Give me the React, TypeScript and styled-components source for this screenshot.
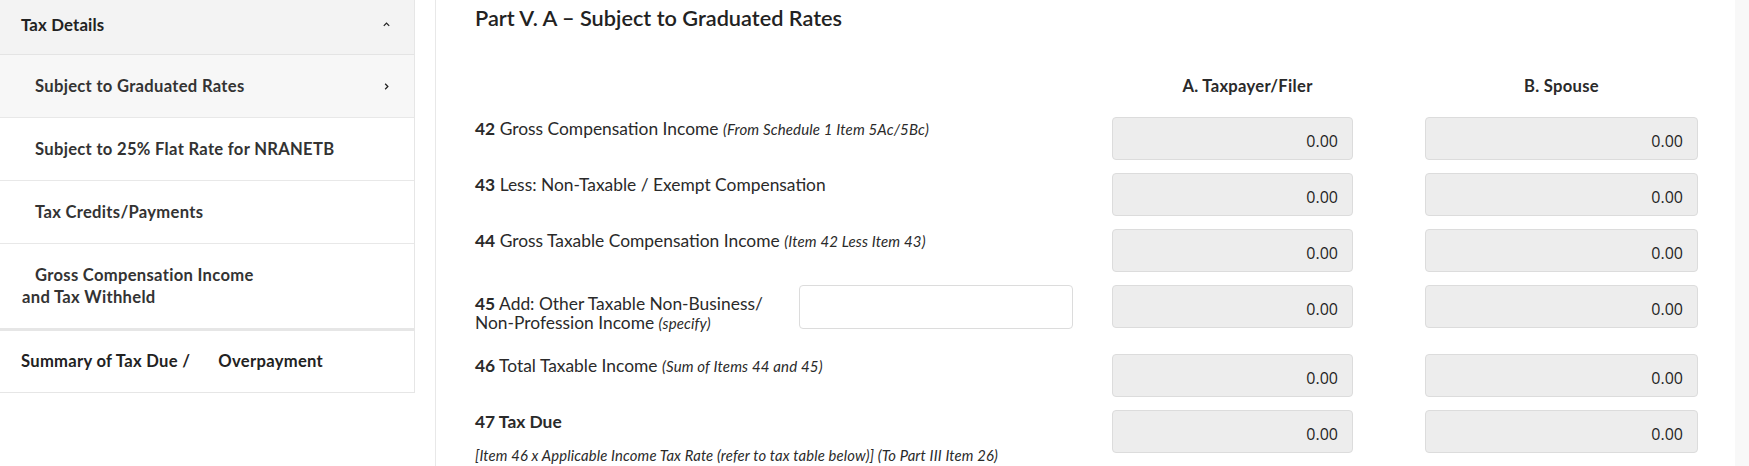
import React from "react";
import styled, { createGlobalStyle } from "styled-components";

const GlobalStyle = createGlobalStyle`
  html, body { margin: 0; padding: 0; background: #ffffff; }
  body { font-family: Lato, "Open Sans", sans-serif; color: #2a2a2a; }
  * { box-sizing: border-box; }
`;

const Page = styled.div`
  display: flex;
  align-items: flex-start;
  width: 1749px;
  height: 466px;
  overflow: hidden;
  background: #ffffff;
`;

const Sidebar = styled.nav`
  width: 415px;
  flex: none;
  border-right: 1px solid #e6e6e6;
  border-bottom: 1px solid #e6e6e6;
`;

const GroupHeader = styled.div`
  display: flex;
  align-items: center;
  justify-content: space-between;
  height: 55px;
  padding: 0 22px 5px 21px;
  background: #f3f3f3;
  border-bottom: 1px solid #e4e4e4;
  font-size: 16.8px;
  letter-spacing: 0.15px;
  font-weight: 700;
  color: #222;
`;

const SubItem = styled.div<{ $active?: boolean; $last?: boolean }>`
  display: flex;
  align-items: center;
  justify-content: space-between;
  padding: 20px 22px 20px 22px;
  line-height: 22px;
  font-size: 16.6px;
  letter-spacing: 0.3px;
  font-weight: 700;
  color: #333;
  text-indent: 13px;
  background: ${(p) => (p.$active ? "#f7f7f7" : "#ffffff")};
  border-bottom: ${(p) => (p.$last ? "3px solid #e6e6e6" : "1px solid #e8e8e8")};
`;

const TopItem = styled.div`
  display: flex;
  align-items: center;
  padding: 19px 22px 20px 21px;
  line-height: 22px;
  font-size: 16.6px;
  letter-spacing: 0.3px;
  font-weight: 700;
  color: #222;
`;

const Spacer = styled.span`
  display: inline-block;
  width: 28px;
`;

const Chevron = styled.svg`
  width: 9px;
  height: 9px;
  flex: none;
  margin-right: 1px;
`;

const Main = styled.main`
  flex: 1;
  margin-left: 20px;
  height: 466px;
  border-left: 1px solid #e8e8e8;
  padding: 4px 0 0 39px;
`;

const Gutter = styled.div`
  width: 14px;
  flex: none;
  height: 466px;
  background: #f8f8f8;
`;

const Title = styled.h2`
  margin: 0;
  font-size: 21.7px;
  line-height: 28px;
  font-weight: 600;
  color: #222;
`;

const Row = styled.div<{ $mb?: number; $mt?: number }>`
  display: grid;
  grid-template-columns: 324px 274px 39px 241px 72px 273px;
  grid-template-areas: "label spec . a . b";
  align-items: start;
  margin-top: ${(p) => p.$mt ?? 0}px;
  margin-bottom: ${(p) => p.$mb ?? 14}px;
`;

const ColHead = styled.div<{ $area: string; $shift?: number }>`
  grid-area: ${(p) => p.$area};
  text-align: center;
  padding-left: ${(p) => p.$shift ?? 0}px;
  font-size: 16.6px;
  letter-spacing: 0.3px;
  font-weight: 700;
  line-height: 22px;
  color: #2a2a2a;
`;

const Label = styled.div<{ $wide?: boolean; $pt?: number; $lh?: number }>`
  grid-column: ${(p) => (p.$wide ? "1 / span 2" : "1")};
  font-size: 17.4px;
  line-height: ${(p) => p.$lh ?? 24}px;
  padding-top: ${(p) => p.$pt ?? 0}px;
  color: #2a2a2a;
  white-space: nowrap;
`;

const Num = styled.b`
  font-weight: 700;
`;

const Note = styled.i`
  font-size: 15px;
  font-style: italic;
  letter-spacing: 0.15px;
`;

const SubNote = styled.div`
  margin-top: 12px;
  font-size: 14.8px;
  font-style: italic;
  line-height: 18px;
  letter-spacing: 0.15px;
`;

const Amount = styled.input<{ $area: string }>`
  grid-area: ${(p) => p.$area};
  height: 43px;
  width: 100%;
  padding: 4px 14px 0 10px;
  border: 1px solid #dcdcdc;
  border-radius: 4px;
  background: #ededed;
  text-align: right;
  font-family: "Open Sans", "Noto Sans", sans-serif;
  font-size: 16px;
  color: #1f1f1f;
  outline: none;
`;

const Specify = styled.input`
  grid-area: spec;
  height: 44px;
  width: 100%;
  border: 1px solid #dcdcdc;
  border-radius: 4px;
  background: #ffffff;
  outline: none;
`;

const ChevronUp = () => (
  <Chevron viewBox="0 0 10 10">
    <path d="M2 6.5 L5 3.5 L8 6.5" fill="none" stroke="#222" strokeWidth="1.4" />
  </Chevron>
);

const ChevronRight = () => (
  <Chevron viewBox="0 0 10 10">
    <path d="M3.5 2 L6.5 5 L3.5 8" fill="none" stroke="#222" strokeWidth="1.4" />
  </Chevron>
);

type Item = {
  num: string;
  text: string;
  note?: string;
};

const rows: Item[] = [
  { num: "42", text: "Gross Compensation Income", note: "(From Schedule 1 Item 5Ac/5Bc)" },
  { num: "43", text: "Less: Non-Taxable / Exempt Compensation" },
  { num: "44", text: "Gross Taxable Compensation Income", note: "(Item 42 Less Item 43)" },
];

const Amounts = () => (
  <>
    <Amount $area="a" readOnly value="0.00" />
    <Amount $area="b" readOnly value="0.00" />
  </>
);

export default function App() {
  return (
    <>
      <GlobalStyle />
      <Page>
        <Sidebar>
          <GroupHeader>
            <span>Tax Details</span>
            <ChevronUp />
          </GroupHeader>
          <SubItem $active>
            <span>Subject to Graduated Rates</span>
            <ChevronRight />
          </SubItem>
          <SubItem>
            <span>Subject to 25% Flat Rate for NRANETB</span>
          </SubItem>
          <SubItem>
            <span>Tax Credits/Payments</span>
          </SubItem>
          <SubItem $last>
            <span>
              Gross Compensation Income
              <br />
              and Tax Withheld
            </span>
          </SubItem>
          <TopItem>
            Summary of Tax Due /<Spacer />Overpayment
          </TopItem>
        </Sidebar>

        <Main>
          <Title>Part V. A – Subject to Graduated Rates</Title>
          <Row $mt={43} $mb={20}>
            <ColHead $area="a" $shift={30}>A. Taxpayer/Filer</ColHead>
            <ColHead $area="b">B. Spouse</ColHead>
          </Row>
          {rows.map((r) => (
            <Row key={r.num} $mb={13}>
              <Label $wide>
                <Num>{r.num}</Num> {r.text} {r.note && <Note>{r.note}</Note>}
              </Label>
              <Amounts />
            </Row>
          ))}
          <Row $mb={21}>
            <Label $pt={9} $lh={19}>
              <Num>45</Num> Add: Other Taxable Non-Business/
              <br />
              Non-Profession Income <Note>(specify)</Note>
            </Label>
            <Specify />
            <Amounts />
          </Row>
          <Row $mb={13}>
            <Label $wide>
              <Num>46</Num> Total Taxable Income <Note>(Sum of Items 44 and 45)</Note>
            </Label>
            <Amounts />
          </Row>
          <Row $mb={0}>
            <Label $wide>
              <Num>47 Tax Due</Num>
              <SubNote>
                [Item 46 x Applicable Income Tax Rate (refer to tax table below)] (To Part III Item 26)
              </SubNote>
            </Label>
            <Amounts />
          </Row>
        </Main>
        <Gutter />
      </Page>
    </>
  );
}
